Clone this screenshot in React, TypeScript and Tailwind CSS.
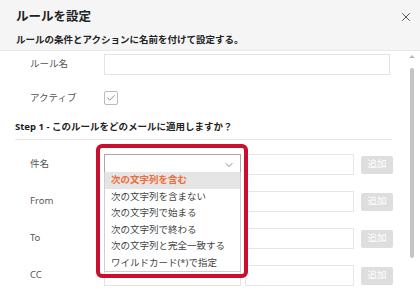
import { ChevronDown, X, Check } from "lucide-react";

const FONT = { fontFamily: '"Noto Sans", "Noto Sans CJK JP", sans-serif' };

const OPTIONS = [
  "次の文字列を含む",
  "次の文字列を含まない",
  "次の文字列で始まる",
  "次の文字列で終わる",
  "次の文字列と完全一致する",
  "ワイルドカード(*)で指定",
];

const ROWS = ["件名", "From", "To", "CC"];

function ConditionRow({ label, active }: { label: string; active?: boolean }) {
  return (
    <div className="flex h-[21px] items-center">
      <div className="w-[89px] pl-[15px] text-[9.5px] text-[#555]">{label}</div>
      <div
        className={`flex h-[21px] w-[137px] items-center justify-end border bg-white pr-[5px] ${
          active ? "border-[#a9a9a9]" : "border-[#e3e3e3]"
        }`}
      >
        <ChevronDown className="h-[12px] w-[12px] text-[#666]" strokeWidth={1.5} />
      </div>
      <div className="ml-[4px] h-[21px] w-[109px] border border-[#e6e6e6] bg-white" />
      <div className="ml-[7px] flex h-[18px] w-[32px] items-center justify-center rounded-[2px] bg-[#dedede] text-[9.5px] text-white">
        追加
      </div>
    </div>
  );
}

export default function App() {
  return (
    <div className="relative h-[300px] w-[420px] overflow-hidden bg-white" style={FONT}>
      {/* Header */}
      <div className="relative h-[51px] border-b border-[#e8e8e8] bg-[#f5f5f5] px-[16px]">
        <div className="pt-[8px] text-[12.5px] font-bold leading-[18px] text-[#222]">ルールを設定</div>
        <div className="mt-[7px] text-[9.5px] font-semibold leading-[13px] text-[#222]">
          ルールの条件とアクションに名前を付けて設定する。
        </div>
        <X className="absolute right-[7px] top-[10px] h-[14px] w-[14px] text-[#444]" strokeWidth={1.5} />
      </div>

      {/* Body */}
      <div className="flex flex-col pl-[15px] pt-[3px]">
        <div className="flex h-[21px] items-center">
          <div className="w-[89px] pl-[15px] text-[9.5px] text-[#555]">ルール名</div>
          <div className="h-[21px] w-[286px] border border-[#e3e3e3] bg-white" />
        </div>
        <div className="mt-[16px] flex h-[14px] items-center">
          <div className="w-[89px] pl-[15px] text-[9.5px] text-[#555]">アクティブ</div>
          <div className="flex h-[14px] w-[14px] items-center justify-center rounded-[2px] border border-[#bbb] bg-white">
            <Check className="h-[10px] w-[10px] text-[#777]" strokeWidth={2} />
          </div>
        </div>
        <div className="mt-[14px] w-[377px] border-b border-[#e6e6e6] pb-[4px] text-[9.5px] font-bold leading-[16px] text-[#222]">
          Step 1 - このルールをどのメールに適用しますか？
        </div>
        <div className="mt-[14px] flex flex-col gap-[16px]">
          {ROWS.map((r, i) => (
            <ConditionRow key={r} label={r} active={i === 0} />
          ))}
        </div>
      </div>

      {/* Open dropdown list */}
      <div className="absolute left-[104px] top-[172px] w-[137px] border border-[#cfcfcf] border-t-0 bg-white">
        {OPTIONS.map((o, i) => (
          <div
            key={o}
            className={`h-[16.5px] pl-[6px] text-[9.5px] leading-[16.5px] ${
              i === 0 ? "bg-[#e5e5e5] font-semibold text-[#f26a35]" : "text-[#444]"
            }`}
          >
            {o}
          </div>
        ))}
      </div>

      {/* Highlight box */}
      <div className="pointer-events-none absolute left-[96px] top-[144px] h-[134px] w-[152px] rounded-[6px] border-[4px] border-[#c8102e]" />

      {/* Scrollbar */}
      <div className="absolute left-[409px] top-[55px] h-0 w-0 border-x-[3px] border-b-[3px] border-x-transparent border-b-[#bbb]" />
      <div className="absolute left-[410px] top-[68px] h-[190px] w-[4px] rounded-full bg-[#c4c4c4]" />
    </div>
  );
}
